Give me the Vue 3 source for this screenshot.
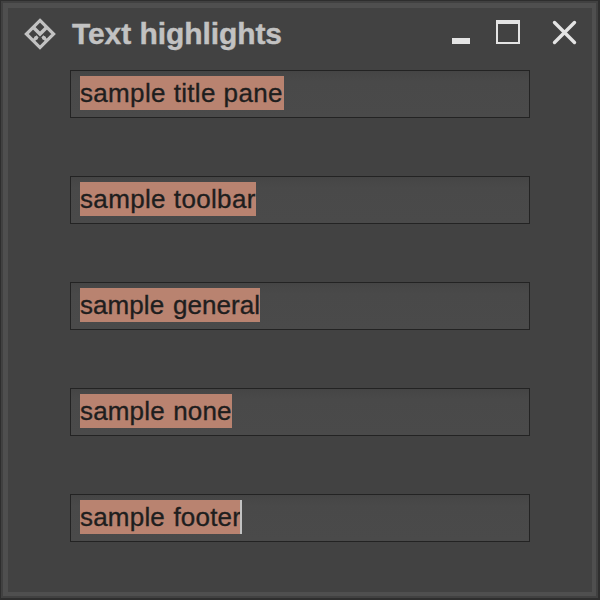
<script setup>
const fields = [
  { text: 'sample title pane', width: 204, spacing: 0.33, word: 0.3 },
  { text: 'sample toolbar', width: 176, spacing: 0.34, word: 0.4 },
  { text: 'sample general', width: 180, spacing: 0.06, word: 1.5 },
  { text: 'sample none', width: 152, spacing: 0.16, word: 1 },
  { text: 'sample footer', width: 160, spacing: 0.2, word: 1, caret: true }
]
</script>

<template>
  <div class="window">
    <div class="frame">
      <div class="content">
        <header class="titlebar">
          <svg class="logo" width="34" height="34" viewBox="0 0 34 34" fill="none" stroke="#c2c2c2" stroke-width="3.2">
            <path d="M17 3.4 30.6 17 17 30.6 3.4 17Z" />
            <path d="M10.2 10.2 17 17 23.8 10.2" stroke-width="3.5" />
            <path d="M10 24 14.6 19.4M24 24 19.4 19.4" stroke-width="3" />
            <path d="M11.6 19.6 14.4 22.4M22.4 19.6 19.6 22.4" stroke-width="2" />
          </svg>
          <h1>Text highlights</h1>
          <svg class="controls" width="128" height="28" viewBox="0 0 128 28">
            <path d="M0 20h18v6H0z" fill="#e4e4e4" />
            <path d="M44 2h24v24H44zM46 6v18h20V6z" fill="#e4e4e4" fill-rule="evenodd" />
            <path d="M102.5 4.5 122.5 24.5M122.5 4.5 102.5 24.5" stroke="#e4e4e4" stroke-width="3.4" stroke-linecap="round" />
          </svg>
        </header>
        <main>
          <div v-for="f in fields" :key="f.text" class="field">
            <span
              class="selection"
              :style="{ width: f.width + 'px', letterSpacing: f.spacing + 'px', wordSpacing: f.word + 'px' }"
            >{{ f.text }}</span>
            <i v-if="f.caret" class="caret"></i>
          </div>
        </main>
      </div>
    </div>
  </div>
</template>

<style>
body { margin: 0; background: #424242; }
</style>

<style scoped>
* { box-sizing: border-box; }
.window {
  width: 600px;
  height: 600px;
  border: solid #2e2e2e;
  border-width: 1px 2px 2px 1px;
  font-family: "Liberation Sans", Arial, sans-serif;
}
.frame {
  height: 100%;
  border: 2px solid #414141;
}
.content {
  height: 100%;
  border: solid #4f4f4f;
  border-width: 5px 4px 4px 5px;
  background: #424242;
}
.titlebar {
  display: flex;
  align-items: flex-start;
  height: 62px;
  padding-left: 15px;
}
.logo { margin-top: 9px; flex: none; }
h1 {
  width: 380px;
  margin: 8px 0 0 15px;
  font-size: 30px;
  line-height: 36px;
  font-weight: 700;
  letter-spacing: -0.08px;
  color: #c2c2c2;
  -webkit-text-stroke: 0.4px #c2c2c2;
  white-space: nowrap;
}
.controls { margin-top: 10px; flex: none; }
main {
  display: flex;
  flex-direction: column;
  gap: 58px;
  padding-left: 62px;
}
.field {
  display: flex;
  width: 460px;
  height: 48px;
  padding: 5px 9px;
  border: 1px solid #232323;
  background: linear-gradient(#454545, #494949 10px, #4a4a4a);
}
.selection {
  height: 34px;
  background: #b98370;
  color: #1e1e1e;
  font-size: 26px;
  line-height: 34px;
  -webkit-text-stroke: 0.35px #1e1e1e;
  white-space: nowrap;
}
.caret {
  width: 2px;
  height: 34px;
  background: #c2c2c2;
}
</style>
